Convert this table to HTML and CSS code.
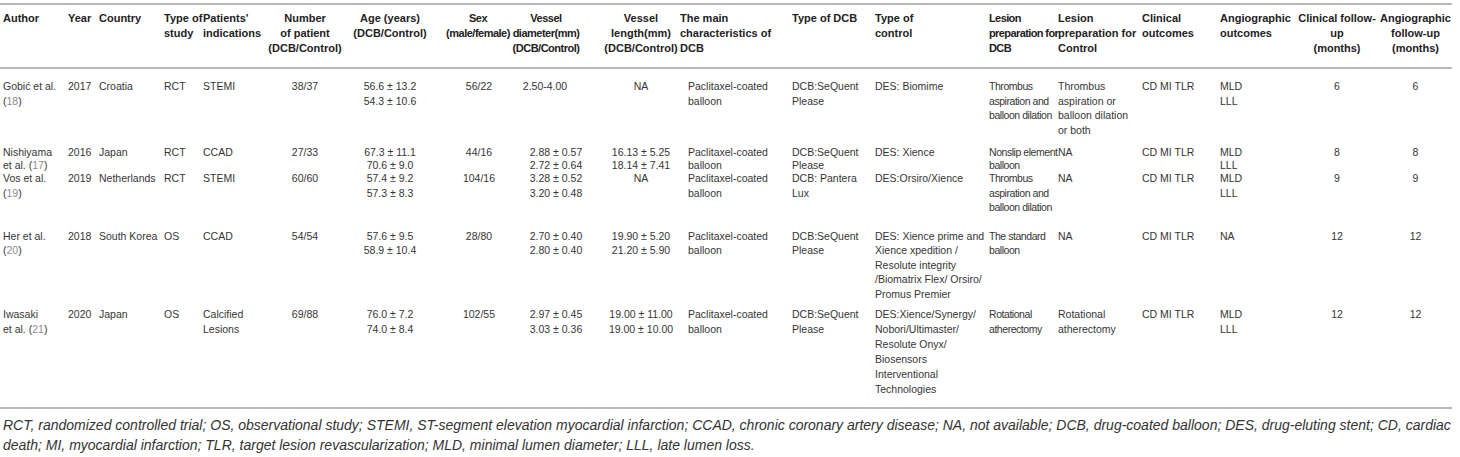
FILE: index.html
```html
<!DOCTYPE html>
<html lang="en">
<head>
<meta charset="utf-8">
<title>Table</title>
<link rel="stylesheet" href="styles.css">
</head>
<body>
<div class="page">
<table class="data">
<colgroup>
<col class="w65"><col class="w31"><col class="w65"><col class="w39"><col class="w65">
<col class="w80"><col class="w87"><col class="w80"><col class="w88"><col class="w77">
<col class="w112"><col class="w83"><col class="w114"><col class="w69"><col class="w84">
<col class="w78"><col class="w78"><col class="w84"><col class="w73">
</colgroup>
<thead>
<tr>
<th>Author</th>
<th>Year</th>
<th>Country</th>
<th>Type of<br>study</th>
<th>Patients'<br>indications</th>
<th class="c6"><div class="cc"><span>Number</span><span>of patient</span><span>(DCB/Control)</span></div></th>
<th class="c7"><div class="cc"><span>Age (years)</span><span>(DCB/Control)</span></div></th>
<th class="c8h"><div class="cc"><span>Sex</span><span>(male/female)</span></div></th>
<th class="c9h"><div class="cc"><span>Vessel</span><span>diameter(mm)</span><span>(DCB/Control)</span></div></th>
<th class="c10"><div class="cc"><span>Vessel</span><span>length(mm)</span><span>(DCB/Control)</span></div></th>
<th>The main<br>characteristics of<br>DCB</th>
<th>Type of DCB</th>
<th>Type of<br>control</th>
<th class="sqh">Lesion<br>preparation for<br>DCB</th>
<th>Lesion<br>preparation for<br>Control</th>
<th>Clinical<br>outcomes</th>
<th>Angiographic<br>outcomes</th>
<th class="c18"><div class="cc"><span>Clinical follow-</span><span>up</span><span>(months)</span></div></th>
<th class="c19"><div class="cc"><span>Angiographic</span><span>follow-up</span><span>(months)</span></div></th>
</tr>
</thead>
<tbody>
<tr class="r1">
<td>Gobić et al.<br>(<span class="ref">18</span>)</td>
<td>2017</td>
<td>Croatia</td>
<td>RCT</td>
<td>STEMI</td>
<td class="ctr c6">38/37</td>
<td class="ctr c7">56.6 ± 13.2<br>54.3 ± 10.6</td>
<td class="ctr c8">56/22</td>
<td class="ctr c9a">2.50-4.00</td>
<td class="ctr c10">NA</td>
<td class="ind">Paclitaxel-coated<br>balloon</td>
<td>DCB:SeQuent<br>Please</td>
<td>DES: Biomime</td>
<td class="sq">Thrombus<br>aspiration and<br>balloon dilation</td>
<td>Thrombus<br>aspiration or<br>balloon dilation<br>or both</td>
<td>CD MI TLR</td>
<td>MLD<br>LLL</td>
<td class="ctr c18">6</td>
<td class="ctr c19">6</td>
</tr>
<tr class="r2">
<td>Nishiyama<br>et al. (<span class="ref">17</span>)</td>
<td>2016</td>
<td>Japan</td>
<td>RCT</td>
<td>CCAD</td>
<td class="ctr c6">27/33</td>
<td class="ctr c7">67.3 ± 11.1<br>70.6 ± 9.0</td>
<td class="ctr c8">44/16</td>
<td class="ctr c9">2.88 ± 0.57<br>2.72 ± 0.64</td>
<td class="ctr c10">16.13 ± 5.25<br>18.14 ± 7.41</td>
<td class="ind">Paclitaxel-coated<br>balloon</td>
<td>DCB:SeQuent<br>Please</td>
<td>DES: Xience</td>
<td class="sq">Nonslip element<br>balloon</td>
<td>NA</td>
<td>CD MI TLR</td>
<td>MLD<br>LLL</td>
<td class="ctr c18">8</td>
<td class="ctr c19">8</td>
</tr>
<tr class="r3">
<td>Vos et al.<br>(<span class="ref">19</span>)</td>
<td>2019</td>
<td>Netherlands</td>
<td>RCT</td>
<td>STEMI</td>
<td class="ctr c6">60/60</td>
<td class="ctr c7">57.4 ± 9.2<br>57.3 ± 8.3</td>
<td class="ctr c8">104/16</td>
<td class="ctr c9">3.28 ± 0.52<br>3.20 ± 0.48</td>
<td class="ctr c10">NA</td>
<td class="ind">Paclitaxel-coated<br>balloon</td>
<td>DCB: Pantera<br>Lux</td>
<td>DES:Orsiro/Xience</td>
<td class="sq">Thrombus<br>aspiration and<br>balloon dilation</td>
<td>NA</td>
<td>CD MI TLR</td>
<td>MLD<br>LLL</td>
<td class="ctr c18">9</td>
<td class="ctr c19">9</td>
</tr>
<tr class="r4">
<td>Her et al.<br>(<span class="ref">20</span>)</td>
<td>2018</td>
<td>South Korea</td>
<td>OS</td>
<td>CCAD</td>
<td class="ctr c6">54/54</td>
<td class="ctr c7">57.6 ± 9.5<br>58.9 ± 10.4</td>
<td class="ctr c8">28/80</td>
<td class="ctr c9">2.70 ± 0.40<br>2.80 ± 0.40</td>
<td class="ctr c10">19.90 ± 5.20<br>21.20 ± 5.90</td>
<td class="ind">Paclitaxel-coated<br>balloon</td>
<td>DCB:SeQuent<br>Please</td>
<td>DES: Xience prime and<br>Xience xpedition /<br>Resolute integrity<br>/Biomatrix Flex/ Orsiro/<br>Promus Premier</td>
<td class="sq">The standard<br>balloon</td>
<td>NA</td>
<td>CD MI TLR</td>
<td>NA</td>
<td class="ctr c18">12</td>
<td class="ctr c19">12</td>
</tr>
<tr class="r5">
<td>Iwasaki<br>et al. (<span class="ref">21</span>)</td>
<td>2020</td>
<td>Japan</td>
<td>OS</td>
<td>Calcified<br>Lesions</td>
<td class="ctr c6">69/88</td>
<td class="ctr c7">76.0 ± 7.2<br>74.0 ± 8.4</td>
<td class="ctr c8">102/55</td>
<td class="ctr c9">2.97 ± 0.45<br>3.03 ± 0.36</td>
<td class="ctr c10">19.00 ± 11.00<br>19.00 ± 10.00</td>
<td class="ind">Paclitaxel-coated<br>balloon</td>
<td>DCB:SeQuent<br>Please</td>
<td>DES:Xience/Synergy/<br>Nobori/Ultimaster/<br>Resolute Onyx/<br>Biosensors<br>Interventional<br>Technologies</td>
<td class="sq">Rotational<br>atherectomy</td>
<td>Rotational<br>atherectomy</td>
<td>CD MI TLR</td>
<td>MLD<br>LLL</td>
<td class="ctr c18">12</td>
<td class="ctr c19">12</td>
</tr>
</tbody>
</table>
<p class="note">RCT, randomized controlled trial; OS, observational study; STEMI, ST-segment elevation myocardial infarction; CCAD, chronic coronary artery disease; NA, not available; DCB, drug-coated balloon; DES, drug-eluting stent; CD, cardiac<br>death; MI, myocardial infarction; TLR, target lesion revascularization; MLD, minimal lumen diameter; LLL, late lumen loss.</p>
</div>
</body>
</html>
```
FILE: styles.css
```css
html, body {
  margin: 0;
  padding: 0;
  background: #ffffff;
}

.page {
  padding-top: 3px;
  width: 1460px;
  font-family: "Liberation Sans", Arial, Helvetica, sans-serif;
  color: #353535;
}

.data {
  table-layout: fixed;
  width: 1452px;
  border-collapse: separate;
  border-spacing: 0;
  font-size: 10.5px;
}

.w31 { width: 31px; }
.w39 { width: 39px; }
.w65 { width: 65px; }
.w69 { width: 69px; }
.w73 { width: 73px; }
.w77 { width: 77px; }
.w78 { width: 78px; }
.w80 { width: 80px; }
.w83 { width: 83px; }
.w84 { width: 84px; }
.w87 { width: 87px; }
.w88 { width: 88px; }
.w112 { width: 112px; }
.w114 { width: 114px; }

.data th,
.data td {
  text-align: left;
  vertical-align: top;
  white-space: nowrap;
  padding-left: 3px;
  padding-right: 0;
}

.data th {
  font-size: 11px;
  font-weight: bold;
  color: #222222;
  line-height: 15px;
  padding-top: 6px;
  padding-bottom: 11px;
  border-top: 2px solid #b9b9b9;
  border-bottom: 2px solid #b9b9b9;
}

/* centred header stack: overflow spreads evenly on both sides */
.cc {
  display: flex;
  flex-direction: column;
  align-items: center;
}

.data td {
  line-height: 14.5px;
  padding-bottom: 0;
}

.data .ctr { text-align: center; }
.data .c6 { padding-left: 3px; padding-right: 3px; }
.data .c7 { padding-left: 3px; padding-right: 0; }
.data .c8 { padding-left: 14px; padding-right: 0; }
.data .c8h { padding-left: 12px; padding-right: 0; letter-spacing: -0.5px; }
.data .c9h { padding-left: 0; padding-right: 20px; letter-spacing: -0.5px; }
.data .c9 { padding-left: 0; padding-right: 0; }
.data .c9a { padding-left: 0; padding-right: 22px; }
.data .c10 { padding-left: 5px; padding-right: 0; }
.data .c18 { padding-left: 3px; padding-right: 3px; }
.data .c19 { padding-left: 3px; padding-right: 3px; }

.data td.ind { padding-left: 11px; }
.data .sq { letter-spacing: -0.45px; }
.data .sqh { letter-spacing: -0.6px; }

.r1 td { padding-top: 10px; }
.r2 td { padding-top: 9px; line-height: 12.5px; }
.r3 td { padding-top: 0; }
.r4 td { padding-top: 14px; }
.r5 td {
  padding-top: 5.5px;
  line-height: 15px;
  padding-bottom: 10.5px;
  border-bottom: 2px solid #b9b9b9;
}

.ref { color: #8c8c8c; }

.note {
  margin: 6px 0 0 3px;
  font-size: 14px;
  line-height: 20px;
  font-style: italic;
  color: #333333;
  white-space: nowrap;
}
```
